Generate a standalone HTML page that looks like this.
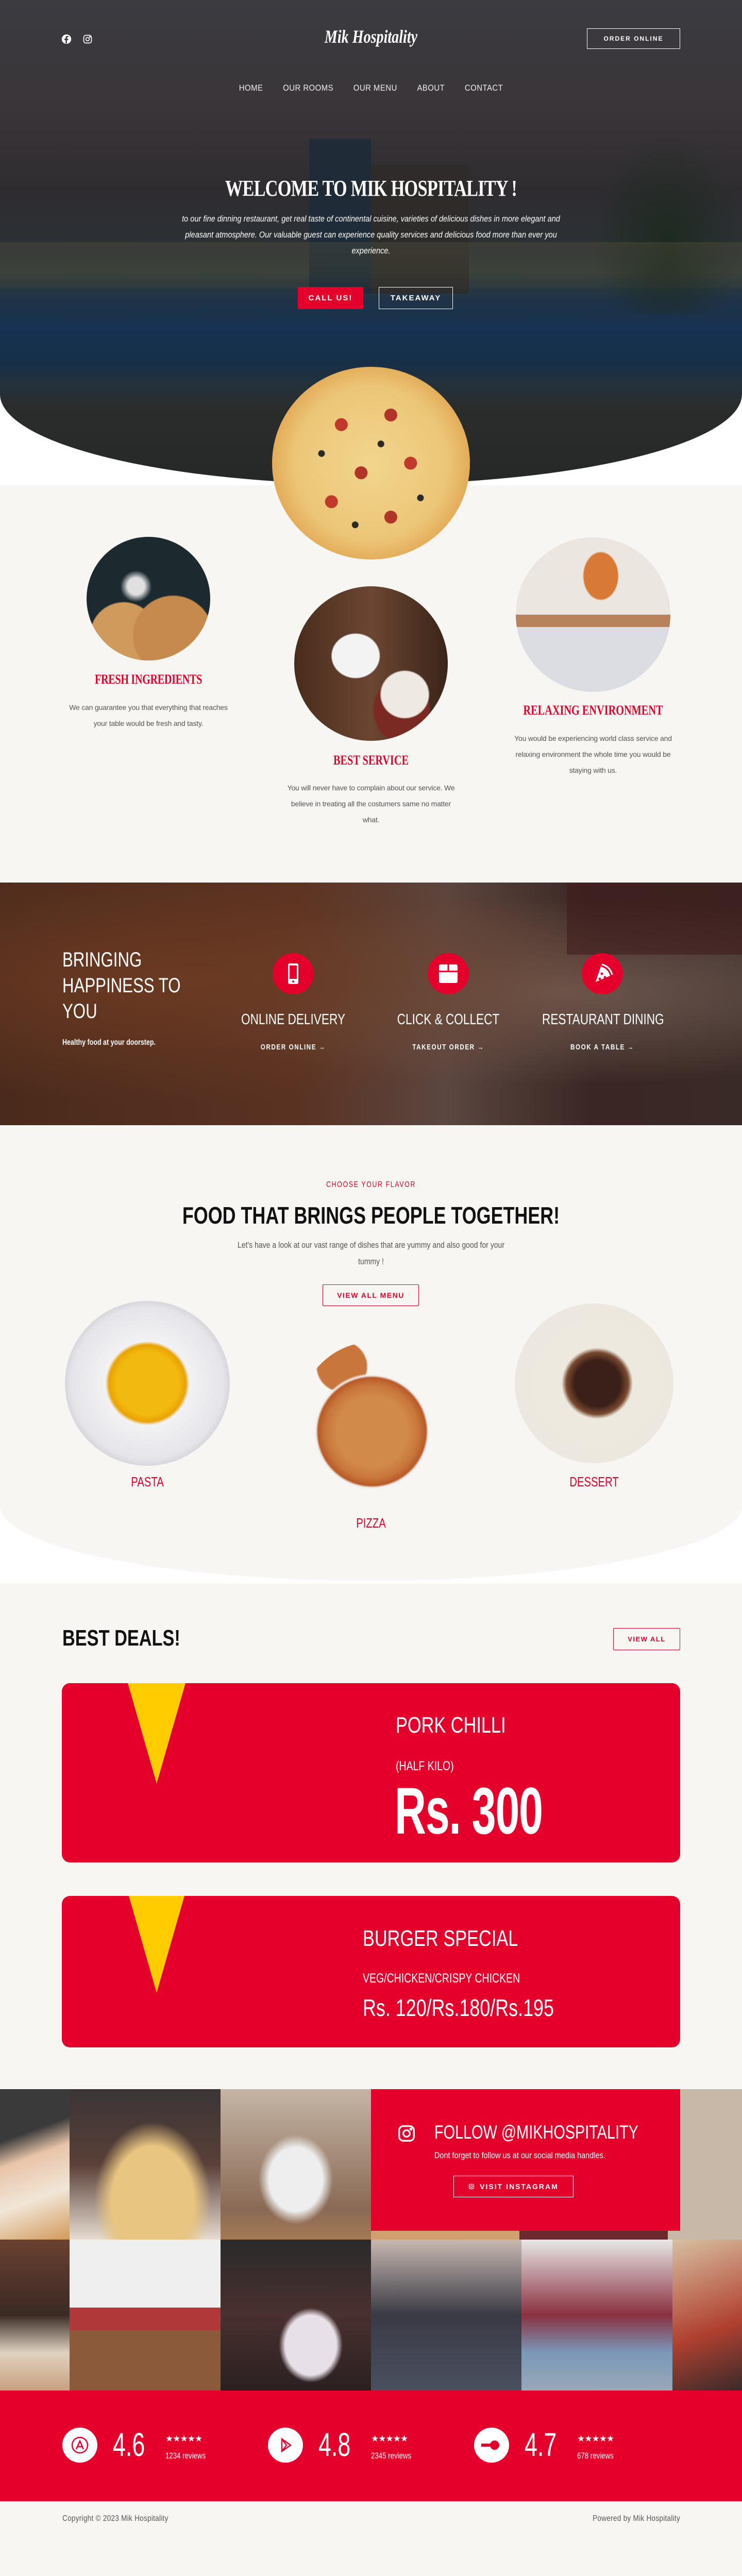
<!DOCTYPE html>
<html style="overflow:hidden;height:5004px"><head><meta charset="utf-8">
<style>
*{margin:0;padding:0;box-sizing:border-box}
body{width:1440px;height:5004px;background:#f7f6f2;font-family:"Liberation Sans",sans-serif;position:relative;overflow:hidden}
.a{position:absolute}
.n{transform:scaleX(.78);transform-origin:left top;white-space:nowrap}
.nc{transform:scaleX(.78);transform-origin:center top;white-space:nowrap}
.c{text-align:center}
.red{color:#e4002b}
.w{color:#fff}
.circ{border-radius:50%;overflow:hidden}
.btn{border:1.5px solid #fff;color:#fff;font-size:13px;letter-spacing:2px;font-weight:bold;display:flex;align-items:center;justify-content:center}
.rbtn{border:1.5px solid #e4002b;color:#e4002b;font-size:13px;letter-spacing:1.5px;font-weight:bold;display:flex;align-items:center;justify-content:center;border-radius:2px}
.p{font-size:14px;color:#555;line-height:31px;letter-spacing:-.2px}
</style></head><body>

<!-- HERO -->
<div class="a" style="left:0;top:0;width:1440px;height:942px;background:#fff"></div>
<div class="a" style="left:0;top:0;width:1440px;height:940px;border-radius:0 0 50% 50% / 0 0 175px 175px;overflow:hidden;background:linear-gradient(180deg,#3b3b41 0%,#3a3538 22%,#2e2c30 40%,#2b3236 52%,#36403a 56%,#1f3348 62%,#173252 68%,#15304a 74%,#22313c 79%,#2b2d2d 84%,#262828 100%)">
  <div class="a" style="left:600px;top:270px;width:120px;height:300px;background:#1b2a3a;opacity:.8"></div>
  <div class="a" style="left:720px;top:320px;width:190px;height:250px;background:#2e2a28;opacity:.8"></div>
  <div class="a" style="left:1150px;top:260px;width:290px;height:350px;background:radial-gradient(ellipse at 50% 60%,#1d2a20,transparent 70%)"></div>
  <div class="a" style="left:0;top:470px;width:1440px;height:90px;background:linear-gradient(180deg,rgba(90,85,60,.35),rgba(60,60,50,.2))"></div>
</div>
<svg class="a" style="left:118px;top:65px" width="22" height="22" viewBox="0 0 24 24"><circle cx="12" cy="12" r="10" fill="#fff"/><path d="M13 21v-7h2.5l.4-3H13V9.3c0-.8.3-1.3 1.4-1.3H16V5.3c-.3 0-1.2-.1-2.2-.1-2.2 0-3.7 1.3-3.7 3.8V11H7.7v3h2.4v7z" fill="#3a3a40"/></svg>
<svg class="a" style="left:160px;top:66px" width="20" height="20" viewBox="0 0 24 24" fill="none" stroke="#fff" stroke-width="2"><rect x="3" y="3" width="18" height="18" rx="5"/><circle cx="12" cy="12" r="4"/><circle cx="17.3" cy="6.7" r=".8" fill="#fff"/></svg>
<div class="a c w nc" style="left:520px;top:50px;width:400px;font-family:'Liberation Serif',serif;font-style:italic;font-weight:bold;font-size:36px">Mik Hospitality</div>
<div class="a btn" style="left:1139px;top:55px;width:181px;height:40px;font-size:12px">ORDER ONLINE</div>
<div class="a" style="left:320px;top:161px;width:800px;text-align:center;font-size:17px;color:#eee;letter-spacing:.5px;white-space:nowrap;transform:scaleX(.88);transform-origin:center top">
<span>HOME</span><span style="margin-left:44px">OUR ROOMS</span><span style="margin-left:44px">OUR MENU</span><span style="margin-left:44px">ABOUT</span><span style="margin-left:44px">CONTACT</span></div>
<div class="a c w nc" style="left:0;top:340px;width:1440px;font-family:'Liberation Serif',serif;font-weight:bold;font-size:44px;letter-spacing:-1px">WELCOME TO MIK HOSPITALITY !</div>
<div class="a c w" style="left:290px;top:410px;width:860px;font-style:italic;font-size:16.5px;line-height:31px;transform:scaleX(.88);transform-origin:center top">to our fine dinning restaurant, get real taste of continental cuisine, varieties of delicious dishes in more elegant and pleasant atmosphere. Our valuable guest can experience quality services and delicious food more than ever you experience.</div>
<div class="a btn" style="left:578px;top:557px;width:127px;height:43px;background:#e4002b;border-color:#e4002b;font-size:15px">CALL US!</div>
<div class="a btn" style="left:735px;top:557px;width:144px;height:43px;font-size:15px">TAKEAWAY</div>

<!-- pizza -->
<div class="a circ" style="left:528px;top:712px;width:384px;height:374px;background:radial-gradient(circle,#f2d58d 0%,#ecc678 55%,#e0a24d 78%,#c9742c 88%,#b5591d 95%,#a24a15 100%)">
 <div class="a" style="left:0;top:0;width:384px;height:374px;background:radial-gradient(circle at 35% 30%,#c0392b 0 12px,transparent 13px),radial-gradient(circle at 60% 25%,#b03427 0 12px,transparent 13px),radial-gradient(circle at 70% 50%,#c0392b 0 12px,transparent 13px),radial-gradient(circle at 45% 55%,#b03427 0 12px,transparent 13px),radial-gradient(circle at 30% 70%,#c0392b 0 12px,transparent 13px),radial-gradient(circle at 60% 78%,#b03427 0 12px,transparent 13px),radial-gradient(circle at 25% 45%,#2a2a2a 0 6px,transparent 7px),radial-gradient(circle at 55% 40%,#2a2a2a 0 6px,transparent 7px),radial-gradient(circle at 75% 68%,#2a2a2a 0 6px,transparent 7px),radial-gradient(circle at 42% 82%,#2a2a2a 0 6px,transparent 7px)"></div>
</div>

<!-- FEATURES -->
<div class="a circ" style="left:168px;top:1042px;width:240px;height:240px;background:radial-gradient(circle at 70% 80%,#c58a4c 0 30%,transparent 31%),radial-gradient(circle at 30% 80%,#d09a5c 0 25%,transparent 26%),radial-gradient(circle at 40% 40%,#e0e0e0 0 8%,transparent 15%),#1c2a30"></div>
<div class="a c red nc" style="left:88px;top:1304px;width:400px;font-family:'Liberation Serif',serif;font-weight:bold;font-size:26px;letter-spacing:-.5px">FRESH INGREDIENTS</div>
<div class="a c p" style="left:123px;top:1358px;width:330px">We can guarantee you that everything that reaches your table would be fresh and tasty.</div>

<div class="a circ" style="left:571px;top:1138px;width:298px;height:300px;background:radial-gradient(ellipse at 40% 45%,#f3f3f3 0 18%,transparent 19%),radial-gradient(ellipse at 72% 70%,#efe9e4 0 15%,transparent 16%),radial-gradient(ellipse at 70% 80%,#7a2a22 0 18%,transparent 19%),linear-gradient(90deg,#4a2c1c,#6b4632 50%,#3a2418)"></div>
<div class="a c red nc" style="left:520px;top:1461px;width:400px;font-family:'Liberation Serif',serif;font-weight:bold;font-size:26px">BEST SERVICE</div>
<div class="a c p" style="left:550px;top:1514px;width:340px">You will never have to complain about our service. We believe in treating all the costumers same no matter what.</div>

<div class="a circ" style="left:1001px;top:1043px;width:300px;height:300px;background:radial-gradient(ellipse at 55% 25%,#d87a36 0 14%,transparent 15%),linear-gradient(180deg,#ece6e0 0 50%,#b8835a 50% 58%,#dcdde3 58%)"></div>
<div class="a c red nc" style="left:951px;top:1364px;width:400px;font-family:'Liberation Serif',serif;font-weight:bold;font-size:26px">RELAXING ENVIRONMENT</div>
<div class="a c p" style="left:991px;top:1418px;width:320px">You would be experiencing world class service and relaxing environment the whole time you would be staying with us.</div>

<!-- BANNER -->
<div class="a" style="left:0;top:1713px;width:1440px;height:471px;background:radial-gradient(ellipse at 25% 40%,#6b3a22,transparent 60%),radial-gradient(ellipse at 75% 45%,#6e5a52,transparent 50%),linear-gradient(90deg,#4a2a1c 0%,#5a3222 40%,#5b4640 60%,#3a2623 80%,#3a2a26 100%)"></div>
<div class="a" style="left:1100px;top:1713px;width:340px;height:140px;background:#3f1d1c;opacity:.6"></div>
<div class="a w n" style="left:121px;top:1838px;font-size:40px;line-height:50px">BRINGING<br>HAPPINESS TO<br>YOU</div>
<div class="a w n" style="left:121px;top:2015px;font-size:16px;font-weight:bold">Healthy food at your doorstep.</div>

<div class="a circ" style="left:529px;top:1850px;width:80px;height:80px;background:#e4002b"></div>
<svg class="a" style="left:557px;top:1868px" width="24" height="44" viewBox="0 0 24 44"><rect x="2" y="2" width="20" height="40" rx="3" fill="#fff"/><rect x="5" y="6" width="14" height="26" fill="#e4002b"/><circle cx="12" cy="37" r="2" fill="#e4002b"/></svg>
<div class="a circ" style="left:830px;top:1850px;width:80px;height:80px;background:#e4002b"></div>
<svg class="a" style="left:850px;top:1870px" width="40" height="40" viewBox="0 0 40 40"><rect x="2" y="2" width="36" height="36" rx="3" fill="#fff"/><rect x="18.5" y="0" width="3" height="14" fill="#e4002b"/><rect x="0" y="14" width="40" height="3" fill="#e4002b"/></svg>
<div class="a circ" style="left:1129px;top:1850px;width:80px;height:80px;background:#e4002b"></div>
<svg class="a" style="left:1150px;top:1870px" width="40" height="40" viewBox="0 0 40 40"><path d="M6 36 L16 6 Q30 10 34 24 Z" fill="#fff"/><path d="M18 2 Q34 6 38 22" stroke="#fff" stroke-width="3" fill="none"/><circle cx="18" cy="20" r="2.5" fill="#e4002b"/><circle cx="14" cy="30" r="2.5" fill="#e4002b"/><circle cx="24" cy="27" r="2.5" fill="#e4002b"/></svg>

<div class="a c w nc" style="left:419px;top:1963px;width:300px;font-size:29px">ONLINE DELIVERY</div>
<div class="a c w nc" style="left:720px;top:1963px;width:300px;font-size:29px">CLICK &amp; COLLECT</div>
<div class="a c w nc" style="left:1019px;top:1963px;width:300px;font-size:29px">RESTAURANT DINING</div>
<div class="a c w nc" style="left:419px;top:2024px;width:300px;font-size:15px;letter-spacing:2px;font-weight:bold">ORDER ONLINE →</div>
<div class="a c w nc" style="left:720px;top:2024px;width:300px;font-size:15px;letter-spacing:2px;font-weight:bold">TAKEOUT ORDER →</div>
<div class="a c w nc" style="left:1019px;top:2024px;width:300px;font-size:15px;letter-spacing:2px;font-weight:bold">BOOK A TABLE →</div>

<!-- MENU -->
<div class="a" style="left:0;top:2884px;width:1440px;height:190px;background:#fff"></div>
<div class="a" style="left:0;top:2184px;width:1440px;height:884px;background:#f7f6f2;border-radius:0 0 50% 50% / 0 0 145px 145px"></div>
<div class="a c red nc" style="left:0;top:2291px;width:1440px;font-size:16px;letter-spacing:2px">CHOOSE YOUR FLAVOR</div>
<div class="a c nc" style="left:0;top:2332px;width:1440px;font-size:46px;font-weight:bold;color:#111">FOOD THAT BRINGS PEOPLE TOGETHER!</div>
<div class="a c" style="left:400px;top:2401px;width:640px;font-size:16.5px;color:#555;line-height:32px;transform:scaleX(.85);transform-origin:center top">Let's have a look at our vast range of dishes that are yummy and also good for your tummy !</div>
<div class="a rbtn" style="left:626px;top:2493px;width:187px;height:42px;font-size:14px">VIEW ALL MENU</div>

<div class="a circ" style="left:126px;top:2525px;width:320px;height:320px;background:radial-gradient(circle,#f2b90e 0 27%,#e9a307 33%,#f2f2f4 36%,#e5e5ea 65%,#d8d8de 70%)"></div>
<div class="a circ" style="left:576px;top:2605px;width:292px;height:316px;background:radial-gradient(circle at 50% 55%,#d28a4a 0 30%,#c8763c 40%,#b85a28 46%,#f0f0f0 48%,transparent 50%),radial-gradient(circle at 30% 15%,#c8763c 0 14%,transparent 15%)"></div>
<div class="a circ" style="left:999px;top:2530px;width:308px;height:310px;background:radial-gradient(circle at 52% 50%,#3a2018 0 20%,#7a4a30 27%,#ede9df 31%,#ece8df 100%)"></div>
<div class="a c red nc" style="left:186px;top:2861px;width:200px;font-size:26px">PASTA</div>
<div class="a c red nc" style="left:1053px;top:2861px;width:200px;font-size:26px">DESSERT</div>
<div class="a c red nc" style="left:620px;top:2941px;width:200px;font-size:26px">PIZZA</div>

<!-- DEALS -->
<div class="a n" style="left:121px;top:3155px;font-size:44px;font-weight:bold;color:#111">BEST DEALS!</div>
<div class="a rbtn" style="left:1190px;top:3160px;width:130px;height:43px">VIEW ALL</div>

<div class="a" style="left:120px;top:3267px;width:1200px;height:348px;background:#e4002b;border-radius:16px;overflow:hidden">
 <svg class="a" style="left:128px;top:0" width="112" height="200"><polygon points="0,0 112,0 56,195" fill="#ffcc00"/></svg>
</div>
<div class="a w n" style="left:768px;top:3324px;font-size:44px">PORK CHILLI</div>
<div class="a w n" style="left:768px;top:3414px;font-size:25px">(HALF KILO)</div>
<div class="a w n" style="left:766px;top:3446px;font-size:128px;font-weight:bold;letter-spacing:-2px;line-height:140px;transform:scaleX(.66)">Rs. 300</div>

<div class="a" style="left:120px;top:3680px;width:1200px;height:294px;background:#e4002b;border-radius:16px;overflow:hidden">
 <svg class="a" style="left:130px;top:0" width="112" height="200"><polygon points="0,0 108,0 54,188" fill="#ffcc00"/></svg>
</div>
<div class="a w n" style="left:704px;top:3738px;font-size:44px">BURGER SPECIAL</div>
<div class="a w n" style="left:704px;top:3826px;font-size:25px">VEG/CHICKEN/CRISPY CHICKEN</div>
<div class="a w n" style="left:704px;top:3870px;font-size:46px;font-weight:300">Rs. 120/Rs.180/Rs.195</div>

<!-- INSTAGRAM -->
<div class="a" style="left:0;top:4055px;width:135px;height:292px;background:linear-gradient(160deg,#3a3a3a 0 30%,#e8c4a8 45%,#f1e6d8 70%,#d29a5a)"></div>
<div class="a" style="left:135px;top:4055px;width:293px;height:292px;background:radial-gradient(ellipse at 55% 75%,#e8c580 0 35%,transparent 50%),linear-gradient(180deg,#3a3535,#5a4038 50%,#e6dccf)"></div>
<div class="a" style="left:428px;top:4055px;width:292px;height:292px;background:radial-gradient(ellipse at 50% 60%,#eee 0 25%,transparent 35%),linear-gradient(180deg,#c5b5a5,#8a6a55 80%,#a57a55)"></div>
<div class="a" style="left:720px;top:4055px;width:720px;height:292px;background:linear-gradient(90deg,#d0a070 0 40%,#6a2a30 40% 80%,#c8b8a8 80%)"></div>
<div class="a" style="left:720px;top:4055px;width:600px;height:275px;background:#e4002b"></div>
<svg class="a" style="left:770px;top:4122px" width="38" height="38" viewBox="0 0 24 24" fill="none" stroke="#fff" stroke-width="2"><rect x="3" y="3" width="18" height="18" rx="5"/><circle cx="12" cy="12" r="4"/><circle cx="17.3" cy="6.7" r=".8" fill="#fff"/></svg>
<div class="a w n" style="left:843px;top:4118px;font-size:37px">FOLLOW @MIKHOSPITALITY</div>
<div class="a w n" style="left:843px;top:4174px;font-size:17px;transform:scaleX(.85)">Dont forget to follow us at our social media handles.</div>
<div class="a btn" style="left:880px;top:4223px;width:233px;height:42px;font-size:14px"><svg width="12" height="12" viewBox="0 0 24 24" fill="none" stroke="#fff" stroke-width="2.5" style="margin-right:10px"><rect x="3" y="3" width="18" height="18" rx="5"/><circle cx="12" cy="12" r="4"/></svg>VISIT INSTAGRAM</div>

<div class="a" style="left:0;top:4347px;width:135px;height:293px;background:linear-gradient(180deg,#6a4030,#3a2a25 50%,#e0d2c0 75%,#c8a080)"></div>
<div class="a" style="left:135px;top:4347px;width:293px;height:293px;background:linear-gradient(180deg,#efefef 0 45%,#b03838 45% 60%,#8a5a3a 60%)"></div>
<div class="a" style="left:428px;top:4347px;width:292px;height:293px;background:radial-gradient(ellipse at 60% 70%,#e8e0e8 0 20%,transparent 25%),linear-gradient(180deg,#2a2a2a,#4a3030 50%,#2a2020)"></div>
<div class="a" style="left:720px;top:4347px;width:292px;height:293px;background:linear-gradient(180deg,#c8b8b0,#3a3a45 50%,#4a5060)"></div>
<div class="a" style="left:1012px;top:4347px;width:293px;height:293px;background:linear-gradient(180deg,#e8e8e6,#8a3040 50%,#7a98b8 75%,#9aa8b8)"></div>
<div class="a" style="left:1305px;top:4347px;width:135px;height:293px;background:linear-gradient(160deg,#d8c0a0,#b04030 60%,#3a2a2a)"></div>

<!-- REVIEWS -->
<div class="a" style="left:0;top:4640px;width:1440px;height:215px;background:#e4002b"></div>
<div class="a circ" style="left:121px;top:4712px;width:68px;height:68px;background:#fff"></div>
<svg class="a" style="left:137px;top:4728px" width="36" height="36" viewBox="0 0 36 36" fill="none" stroke="#e4002b" stroke-width="2.5"><circle cx="18" cy="18" r="15"/><path d="M11 26 L18 10 L25 26 M12 21 H24"/></svg>
<div class="a w n" style="left:219px;top:4710px;font-size:64px;line-height:70px;transform:scaleX(.7)">4.6</div>
<div class="a w" style="left:321px;top:4724px;font-size:17px;letter-spacing:-1px">★★★★★</div>
<div class="a w n" style="left:321px;top:4757px;font-size:17px">1234 reviews</div>

<div class="a circ" style="left:520px;top:4712px;width:68px;height:68px;background:#fff"></div>
<svg class="a" style="left:536px;top:4728px" width="36" height="36" viewBox="0 0 36 36" fill="none" stroke="#e4002b" stroke-width="2.5"><path d="M11 6 L28 18 L11 30 Z M11 6 L20 18 L11 30"/></svg>
<div class="a w n" style="left:618px;top:4710px;font-size:64px;line-height:70px;transform:scaleX(.7)">4.8</div>
<div class="a w" style="left:720px;top:4724px;font-size:17px;letter-spacing:-1px">★★★★★</div>
<div class="a w n" style="left:720px;top:4757px;font-size:17px">2345 reviews</div>

<div class="a circ" style="left:920px;top:4712px;width:68px;height:68px;background:#fff"></div>
<svg class="a" style="left:930px;top:4728px" width="48" height="36" viewBox="0 0 48 36"><rect x="4" y="15" width="24" height="6" fill="#e4002b"/><circle cx="30" cy="18" r="9" fill="#e4002b"/></svg>
<div class="a w n" style="left:1018px;top:4710px;font-size:64px;line-height:70px;transform:scaleX(.7)">4.7</div>
<div class="a w" style="left:1120px;top:4724px;font-size:17px;letter-spacing:-1px">★★★★★</div>
<div class="a w n" style="left:1120px;top:4757px;font-size:17px">678 reviews</div>

<!-- FOOTER -->
<div class="a n" style="left:121px;top:4880px;font-size:16px;color:#555;letter-spacing:.3px;transform:scaleX(.85)">Copyright © 2023 Mik Hospitality</div>
<div class="a" style="left:1120px;top:4880px;width:200px;text-align:right;font-size:16px;color:#555;letter-spacing:.3px;transform:scaleX(.85);transform-origin:right top;white-space:nowrap">Powered by Mik Hospitality</div>
</body></html>
